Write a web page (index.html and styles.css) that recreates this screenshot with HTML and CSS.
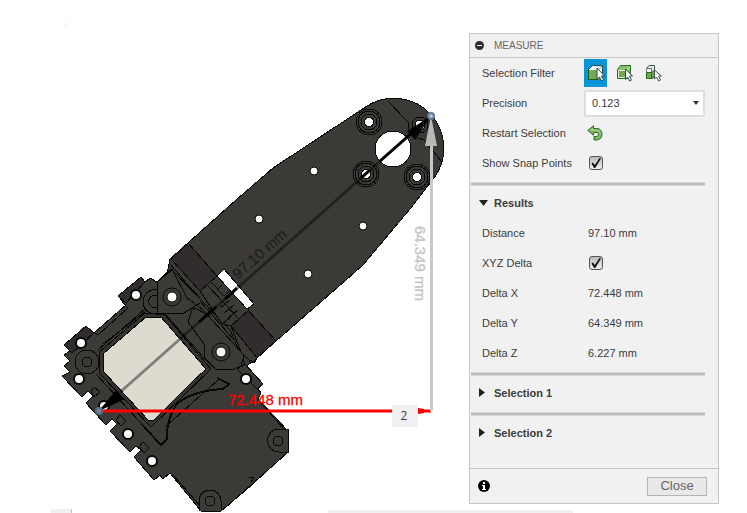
FILE: index.html
```html
<!DOCTYPE html>
<html lang="en">
<head>
<meta charset="utf-8">
<title>Measure</title>
<link rel="stylesheet" href="styles.css">
</head>
<body>
<main class="workspace">
  <svg class="scene" viewBox="0 0 469 513" preserveAspectRatio="xMinYMin meet" role="img" aria-label="Measured bracket and servo assembly">
    <rect x="51" y="509" width="21" height="4" fill="#f1f1f1"/>
    <path d="M71.500 509v4" stroke="#c4c4c4"/>
    <rect x="328" y="510" width="245" height="3" fill="#f1f1f1"/>
    <path d="M62 26q5 0 8-4" fill="none" stroke="#f0f0f0"/>

    <g class="edge" shape-rendering="crispEdges">
      <!-- plate -->
      <path class="solid" d="M170 259L236 200L273 168L367 106A50 50 0 0 1 434 178L410 209L363 265L330 294L276 341L247 366L210 330L165 285Z"/>
      <path class="dark" d="M188 243L217 276L200 291L171 259Z"/>
      <path class="dark" d="M247 309L276 341L257 358L231 326Z"/>
      <path class="none" d="M388 101L405 119L408 122V129M417 138L424 140L442 162M247 356L250 362L255 362L257 357"/>
      <circle class="hole" cx="393" cy="149" r="18"/>
      <g class="none">
        <circle cx="369" cy="122" r="13"/><circle cx="369" cy="122" r="11"/><circle cx="369" cy="122" r="8"/>
        <circle cx="366" cy="174" r="13"/><circle cx="366" cy="174" r="11"/><circle cx="366" cy="174" r="8"/>
        <circle cx="417" cy="177" r="13"/><circle cx="417" cy="177" r="11"/><circle cx="417" cy="177" r="8"/>
        <circle cx="420" cy="125" r="8"/>
      </g>
      <circle class="hole" cx="369" cy="122" r="4.500"/>
      <circle class="hole" cx="366" cy="174" r="4.500"/>
      <circle class="hole" cx="417" cy="177" r="4.500"/>
      <circle class="hole" cx="420" cy="125" r="5"/>
      <circle class="hole" cx="314" cy="171" r="4"/>
      <circle class="hole" cx="259" cy="219" r="4"/>
      <circle class="hole" cx="363" cy="226" r="4"/>
      <circle class="hole" cx="308" cy="274" r="4"/>

      <!-- servo body -->
      <path class="solid" d="M171 269L157 282L150 278L145 282L141 277L118 296L126 305L94 333L86 326L64 345L70 351L64 355L70 361L64 366L70 372L62 376L82 397L88 391L93 396L86 403L106 425L112 419L117 424L110 431L130 452L136 446L141 450L134 457L154 480L160 475L163 479L170 473L201 511H221L246 490L288 452V431L258 399L261 393L258 389L263 384L245 364L230 330Z"/>
      <path class="dark" d="M64 345L86 326L94 333L72 353ZM118 296L141 277L145 282L126 303Z"/>
      <path class="none" d="M122 302L128 308L98 335L93 332M91 391l3 -4l6 5l-6 5zM116 420l4 -5l6 6l-5 5zM139 447l4 -5l6 6l-5 5z"/>
      <path class="none" d="M98 350L145 309M96 374L160 444M103 344L146 311"/>
      <path class="none arc" d="M223 389Q190 391 176 405Q166 421 167 439L161 445L145 428M217 378L229 384L223 389"/>
      <path class="none" d="M173 475L202 508M286 454L225 508M258 400L285 430M218 380L165 427M249 477l5 1l-3 4"/>
      <path class="solid" d="M279 429H288V452H279A11 11 0 0 1 279 429M199 511V501A11 11 0 0 1 221 501V511"/>
      <circle class="none" cx="278" cy="441" r="5"/><circle class="none" cx="210" cy="501" r="5"/>

      <!-- window -->
      <path class="rim" d="M145 313L165 315L211 369L151 427L100 374L99 352Z"/>
      <path class="pale" d="M146 317H161L206 369L190 384L154 420H148L104 372L103 354Z"/>
      <circle class="solid" cx="87" cy="362" r="12"/>
      <circle class="none" cx="87" cy="362" r="5"/>
      <path class="none" d="M158 290A12 12 0 1 0 161 312M157 296A6 6 0 1 0 157 307"/>

      <!-- hinge -->
      <path class="solid" d="M157 282L172 269L187 298L202 309L244 355L241 366L234 369H215L204 358L165 314H157Z"/>
      <path class="none" d="M157 313H184L200 303M157 282L172 270L200 297M170 264L198 297M202 290L211 300M188 322L192 310L195 308L208 315M188 322L204 344V357L215 368M200 301L234 340"/>
      <path class="solid" d="M200 291L217 276L249 310L231 326L222 324Z"/>
      <path class="none" d="M208 286L239 319M211 282l7 7l4 -4M217 289l7 7l5 -5M220 308l10 -8M224 313l10 -8M228 318l10 -8M222 324l9 -7"/>
      <path class="solid" d="M231 326L257 358L254 362L249 360L241 352Z"/>
      <path class="solid" d="M245 364L263 384L257 389L237 369Z"/>
      <path class="hole" d="M224 269L254 304L247 309L217 276Z"/>
    </g>

    <g class="edge">
      <circle class="none" cx="172" cy="297" r="9"/><circle class="none" cx="221" cy="352" r="9"/>
      <circle class="hole" cx="172" cy="297" r="5"/><circle class="hole" cx="221" cy="352" r="5"/>
      <circle class="hole" cx="314" cy="171" r="4"/>
      <circle class="hole" cx="259" cy="219" r="4"/>
      <circle class="hole" cx="363" cy="226" r="4"/>
      <circle class="hole" cx="308" cy="274" r="4"/>
      <circle class="hole screw" cx="136" cy="295" r="5"/>
      <circle class="hole screw" cx="81" cy="343" r="5"/>
      <circle class="hole screw" cx="79" cy="379" r="5"/>
      <circle class="hole screw" cx="104" cy="406" r="5"/>
      <circle class="hole screw" cx="128" cy="434" r="5"/>
      <circle class="hole screw" cx="152" cy="461" r="5"/>
      <circle class="hole screw" cx="246" cy="379" r="5"/>
    </g>

    <!-- distance vector -->
    <g class="vector">
      <path d="M99 411L431 116" stroke="#000" stroke-opacity=".42" stroke-width="3"/>
      <path d="M380 161L431 116M225 299L237 288M199 322L216 307M361 178L370 170" stroke="#000" stroke-width="3"/>
      <path d="M431 116L407 131L415 140Z" fill="#000" fill-opacity=".9"/>
      <path d="M99 411L115 391L125 399Z" fill="#000"/>
      <text class="dim" transform="translate(238 280) rotate(-41.600)" fill="#20201e" stroke="#20201e" stroke-width=".3">97.10 mm</text>
    </g>

    <path d="M99 411H431" stroke="#f00" stroke-width="3"/>
    <path d="M418 408L424 409V413L418 414Z" fill="#f00"/>
    <path d="M431.500 411V140" stroke="#c8c8c8" stroke-width="3"/>
    <path d="M431 116L425 146H437Z" fill="#b8b8b6"/>
    <circle cx="431" cy="116" r="3" fill="#9fc4ef" stroke="#687789" stroke-width="2"/>
    <circle cx="99" cy="411" r="3" fill="#8f7889" stroke="#527087" stroke-width="2"/>
    <g stroke-width=".3">
      <text class="dim" x="228" y="405" fill="#f00" stroke="#f00">72.448 mm</text>
      <text class="dim" transform="translate(415 226) rotate(90)" fill="#c4c4c4" stroke="#c4c4c4">64.349 mm</text>
    </g>
    <rect x="392" y="405" width="26" height="22" fill="#f1f1f1"/>
    <text class="badge" x="404" y="420" text-anchor="middle">2</text>
  </svg>

  <section class="panel" aria-labelledby="panel-title">
    <header class="panel-head">
      <svg width="9" height="9" viewBox="0 0 9 9" aria-hidden="true"><circle cx="4.500" cy="4.500" r="4.500" fill="#2e2e2e"/><path d="M2 4.500h5" stroke="#eee"/></svg>
      <h1 id="panel-title">MEASURE</h1>
    </header>

    <div class="panel-body">
      <div class="row">
        <span>Selection Filter</span>
        <div class="filters">
          <button class="filter active" type="button" aria-label="Select face or body">
            <svg width="18" height="18" viewBox="0 0 18 18"><path d="M1.500 5.500L5.500 1.500H15.500V11L11.500 15.500H1.500Z" fill="#e8f1f5" stroke="#244b51"/><path d="M1.500 5.500h10v10h-10z" fill="#75a957" stroke="#fff"/><path d="M1 15.500h11M1.500 5v11" stroke="#17620f"/><path d="M11.500 5.500l4-4" stroke="#7e999f"/><path d="M10 4V15L12.500 13L14.500 17L16.500 16L14.500 12H17.500Z" fill="#fff" stroke="#35424a"/></svg>
          </button>
          <button class="filter" type="button" aria-label="Select body">
            <svg width="18" height="18" viewBox="0 0 18 18"><path d="M1.500 5.500L4.500 1.500H14.500V11L11.500 14.500H1.500Z" fill="#8cbd75" stroke="#20701a"/><path d="M2.500 6.500h8v7h-8z" fill="#72a750" stroke="#e3f1dc"/><path d="M10.500 6l3-3" stroke="#d9ebce"/><path d="M9.500 5V15.500L11.500 13L13.500 17L15.500 16L13.500 12H16.500Z" fill="#fff" stroke="#344148"/></svg>
          </button>
          <button class="filter" type="button" aria-label="Select component">
            <svg width="18" height="18" viewBox="0 0 18 18"><path d="M1.500 4.500L4 1.500H9.500V12L7.500 14.500H1.500Z" fill="#dcebd4" stroke="#4d5760"/><path d="M1.500 4.500h5v4h-5z" fill="#f4f6f8" stroke="#69737c"/><path d="M1.500 8.500h5v6h-5zM6.500 8.500L9.500 6.500V12L7 14.500" fill="#72aa51" stroke="#246b1c"/><path d="M9.500 6V15L11.500 13L13.500 17L15.500 16L13.500 12H16.500Z" fill="#fff" stroke="#44515b"/></svg>
          </button>
        </div>
      </div>
      <div class="row">
        <label for="precision">Precision</label>
        <select id="precision"><option>0.123</option></select>
      </div>
      <div class="row">
        <span>Restart Selection</span>
        <button class="restart" type="button" aria-label="Restart selection">
          <svg width="16" height="16" viewBox="0 0 16 16"><path d="M.800 5.500L6.500.800V3.500H10C13 3.500 15 6 15 9.500C15 13 12.500 15 9 15H7V11.500H9C10.500 11.500 11.500 10.700 11.500 9.500C11.500 8 10.500 7.500 9 7.500H6.500V10.200Z" fill="#82b565" stroke="#246f1c"/><path d="M3 5.500L5.500 3.500V5H10C12 5 13.500 7 13.500 9" fill="none" stroke="#b5d49f"/></svg>
        </button>
      </div>
      <div class="row">
        <label for="snap">Show Snap Points</label>
        <input id="snap" type="checkbox" checked>
      </div>

      <details class="group" open>
        <summary><svg width="10" height="10" viewBox="0 0 10 10" aria-hidden="true"><path d="M0 2h9L4.500 8z" fill="#222"/></svg>Results</summary>
        <div class="row"><span>Distance</span><output>97.10 mm</output></div>
        <div class="row"><label for="delta">XYZ Delta</label><input id="delta" type="checkbox" checked></div>
        <div class="row"><span>Delta X</span><output>72.448 mm</output></div>
        <div class="row"><span>Delta Y</span><output>64.349 mm</output></div>
        <div class="row"><span>Delta Z</span><output>6.227 mm</output></div>
      </details>
      <details class="group">
        <summary><svg width="10" height="10" viewBox="0 0 10 10" aria-hidden="true"><path d="M0 0v9l6-4.500z" fill="#222"/></svg>Selection 1</summary>
      </details>
      <details class="group">
        <summary><svg width="10" height="10" viewBox="0 0 10 10" aria-hidden="true"><path d="M0 0v9l6-4.500z" fill="#222"/></svg>Selection 2</summary>
      </details>
    </div>

    <footer class="panel-foot">
      <svg width="12" height="12" viewBox="0 0 12 12" role="img" aria-label="Information"><circle cx="6" cy="6" r="6" fill="#000"/><path d="M5 2h2v2H5zM4 5h3v4h1v1H4V9h1V6H4z" fill="#fff"/></svg>
      <button class="close" type="button">Close</button>
    </footer>
  </section>
</main>
</body>
</html>
```
FILE: styles.css
```css
*, *::before { box-sizing: border-box; }

body {
  margin: 0;
  background: #fff;
  color: #3c3c3c;
  font: 11px/14px "Liberation Sans", Arial, sans-serif;
}

button, select, input { font: inherit; color: inherit; margin: 0; }

.workspace {
  display: flex;
  align-items: flex-start;
  min-height: 100vh;
  overflow: hidden;
}

.scene {
  display: block;
  flex: 1;
  min-width: 0;
  overflow: visible;
}

.edge { stroke: #080808; stroke-width: 1; }
.solid { fill: #3c3a36; }
.dark { fill: #302d2c; }
.rim { fill: #353330; }
.none { fill: none; }
.hole { fill: #fff; }
.screw, .arc { stroke-width: 2; }
.pale { fill: #dddbd0; }
.vector { fill: none; }
.dim { font-size: 15px; }
.badge { font: 12px "Open Sans", sans-serif; fill: #3c3c4c; }

.panel {
  position: relative;
  width: 250px;
  margin: 33px 28px 8px 0;
  border: 1px solid #c6c6c6;
  background: #f1f1f1;
}

.panel-head {
  display: flex;
  align-items: center;
  gap: 10px;
  height: 24px;
  padding: 0 5px;
  border-bottom: 1px solid #c6c6c6;
}

.panel-head h1 {
  margin: 0;
  color: #666;
  font-size: 10px;
  font-weight: 400;
}

.panel-body { padding-bottom: 20px; }

.row {
  display: grid;
  grid-template-columns: 102px 1fr;
  align-items: center;
  height: 30px;
  padding: 0 13px 0 12px;
}

.row output { padding-left: 4px; }

.filters { display: flex; gap: 6px; }

.filter, .restart {
  display: grid;
  place-items: center;
  padding: 0;
  border: 0;
  background: none;
}

.filter { width: 23px; height: 28px; }
.filter.active { background: #0696d7; }
.restart { width: 22px; height: 22px; }

select {
  appearance: none;
  width: 100%;
  height: 27px;
  padding: 0 6px;
  border: 2px solid #dedede;
  border-radius: 1px;
  background: #fff url("data:image/svg+xml,%3Csvg xmlns='http://www.w3.org/2000/svg' width='6' height='4'%3E%3Cpath d='M0 0h6L3 4z' fill='%23333'/%3E%3C/svg%3E") no-repeat right 4px center;
}

input[type="checkbox"] {
  appearance: none;
  display: grid;
  place-items: center;
  width: 14px;
  height: 14px;
  margin-left: 5px;
  border: 1px solid #555;
  border-radius: 3px;
  background: linear-gradient(#bbb, #eee);
}

input[type="checkbox"]:checked::before {
  content: "";
  width: 10px;
  height: 10px;
  background: #111;
  clip-path: polygon(5% 55%, 20% 45%, 38% 70%, 85% 0, 100% 5%, 42% 100%, 30% 100%);
}

.group { display: flow-root; }

.group::before {
  content: "";
  display: block;
  height: 4px;
  margin: 4px 13px 2px 1px;
  border: solid #d6d6d6;
  border-width: 1px 0;
  background: #bdbdbd;
}

summary {
  display: flex;
  align-items: center;
  gap: 5px;
  height: 30px;
  padding-left: 9px;
  font-weight: 700;
  list-style: none;
}

.panel-foot {
  display: flex;
  align-items: center;
  justify-content: space-between;
  height: 35px;
  padding: 0 11px 0 8px;
  border-top: 1px solid #c6c6c6;
}

.close {
  width: 60px;
  height: 19px;
  padding: 0;
  border: 1px solid #b4b4b4;
  background: #e8e8e8;
  color: #666;
  font-size: 13px;
  line-height: 16px;
}
```
